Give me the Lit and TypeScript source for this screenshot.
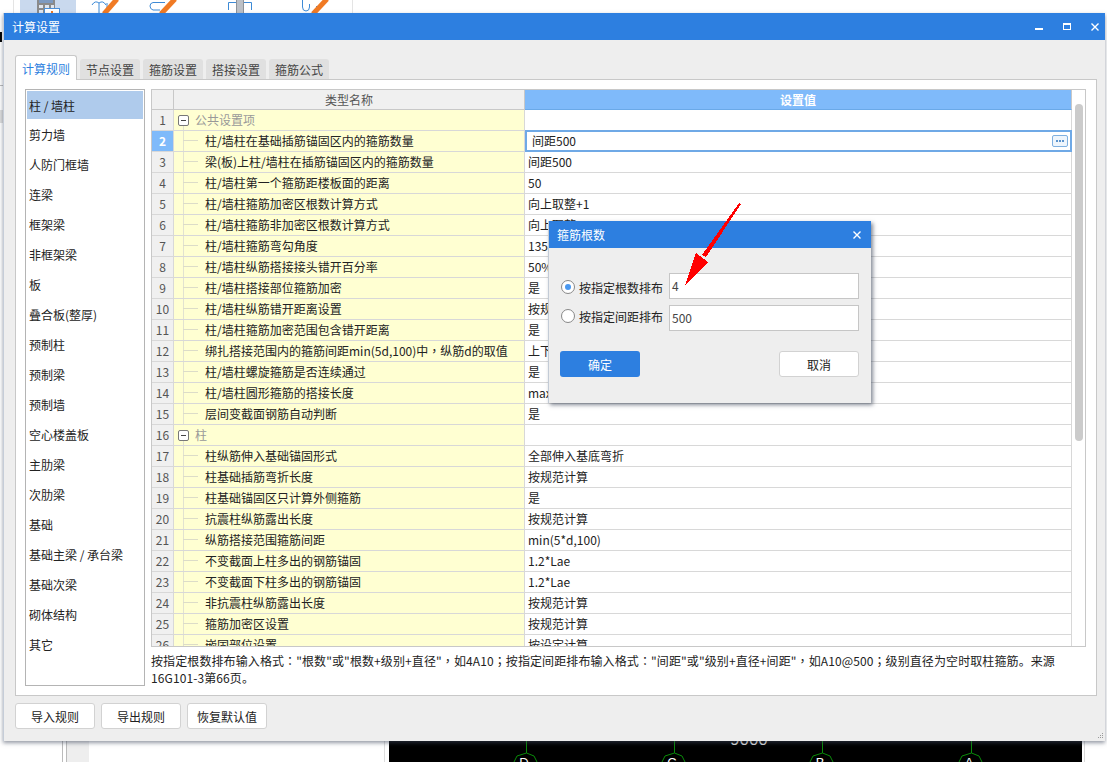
import { LitElement, html, css, svg } from "lit";
import { customElement } from "lit/decorators.js";

const LIST = ["柱 / 墙柱","剪力墙","人防门框墙","连梁","框架梁","非框架梁","板","叠合板(整厚)","预制柱","预制梁","预制墙","空心楼盖板","主肋梁","次肋梁","基础","基础主梁 / 承台梁","基础次梁","砌体结构","其它"];

type Row = { n: number; name: string; val: string; group?: boolean };
const ROWS: Row[] = [
  { n: 1, name: "公共设置项", val: "", group: true },
  { n: 2, name: "柱/墙柱在基础插筋锚固区内的箍筋数量", val: "间距500" },
  { n: 3, name: "梁(板)上柱/墙柱在插筋锚固区内的箍筋数量", val: "间距500" },
  { n: 4, name: "柱/墙柱第一个箍筋距楼板面的距离", val: "50" },
  { n: 5, name: "柱/墙柱箍筋加密区根数计算方式", val: "向上取整+1" },
  { n: 6, name: "柱/墙柱箍筋非加密区根数计算方式", val: "向上取整-1" },
  { n: 7, name: "柱/墙柱箍筋弯勾角度", val: "135°" },
  { n: 8, name: "柱/墙柱纵筋搭接接头错开百分率", val: "50%" },
  { n: 9, name: "柱/墙柱搭接部位箍筋加密", val: "是" },
  { n: 10, name: "柱/墙柱纵筋错开距离设置", val: "按规范计算" },
  { n: 11, name: "柱/墙柱箍筋加密范围包含错开距离", val: "是" },
  { n: 12, name: "绑扎搭接范围内的箍筋间距min(5d,100)中，纵筋d的取值", val: "上下层最小直径" },
  { n: 13, name: "柱/墙柱螺旋箍筋是否连续通过", val: "是" },
  { n: 14, name: "柱/墙柱圆形箍筋的搭接长度", val: "max(lae,300)" },
  { n: 15, name: "层间变截面钢筋自动判断", val: "是" },
  { n: 16, name: "柱", val: "", group: true },
  { n: 17, name: "柱纵筋伸入基础锚固形式", val: "全部伸入基底弯折" },
  { n: 18, name: "柱基础插筋弯折长度", val: "按规范计算" },
  { n: 19, name: "柱基础锚固区只计算外侧箍筋", val: "是" },
  { n: 20, name: "抗震柱纵筋露出长度", val: "按规范计算" },
  { n: 21, name: "纵筋搭接范围箍筋间距", val: "min(5*d,100)" },
  { n: 22, name: "不变截面上柱多出的钢筋锚固", val: "1.2*Lae" },
  { n: 23, name: "不变截面下柱多出的钢筋锚固", val: "1.2*Lae" },
  { n: 24, name: "非抗震柱纵筋露出长度", val: "按规范计算" },
  { n: 25, name: "箍筋加密区设置", val: "按规范计算" },
  { n: 26, name: "嵌固部位设置", val: "按设定计算" },
];

const NOTE = [
  '按指定根数排布输入格式："根数"或"根数+级别+直径"，如4A10；按指定间距排布输入格式："间距"或"级别+直径+间距"，如A10@500；级别直径为空时取柱箍筋。来源',
  "16G101-3第66页。",
];

/* The reference centres its full-width colons, commas and semicolons. */
function punct(s: string) {
  return s.split(/([：，；])/).map((p, i) => (i % 2 ? html`<span class="p">${p}</span>` : p));
}

@customElement("app-root")
export class AppRoot extends LitElement {
  static styles = css`
    :host {
      display: block; position: relative; width: 1107px; height: 762px; overflow: hidden;
      background: #fff; font-family: "Noto Sans CJK SC", "Liberation Sans", sans-serif;
      font-size: 12px; color: #222;
    }
    .p { font-family: "Noto Sans CJK TC", sans-serif; }
    .desk { position: absolute; inset: 0; display: flex; flex-direction: column; justify-content: space-between; }
    .toolbar { height: 13px; position: relative; background: #fff; }
    .tool-sel { position: absolute; left: 20px; top: 0; width: 56px; height: 13px; background: #c9d9ee; }
    .tool-svg { position: absolute; left: 0; top: 0; }
    .ground { height: 21px; display: flex; background: #fff; }
    .g1 { width: 62px; }
    .g2 { width: 4px; border-left: 1px solid #bbb; box-sizing: border-box; }
    .g3 { width: 23px; background: #eee; border-left: 1px solid #bbb; box-sizing: border-box; }
    .g4 { width: 296px; border-right: 1px solid #ddd; box-sizing: border-box; }
    .g4b { width: 4px; }
    .canvas { width: 693px; background: #000; }
    .canvas svg { display: block; }
    .g5 { flex: 1; margin-left: 2px; border-left: 1px solid #d8d8d8; }
    .strip { position: absolute; left: 0; top: 0; }

    .win {
      position: absolute; left: 3px; top: 13px; width: 1102px; height: 728px;
      display: flex; flex-direction: column; background: #eeeeee;
      box-shadow: 0 2px 4px rgba(60,70,90,.55); border-left: 1px solid #c5cdd8; box-sizing: border-box;
    }
    .titlebar {
      height: 27px; flex: none; background: #2d7fe0; color: #fff; display: flex; align-items: center;
      padding: 0 6px 0 8px; font-size: 12px; justify-content: space-between;
    }
    .winbtns { display: flex; gap: 20px; align-items: center; }
    .winbtns svg { display: block; }
    .body { flex: 1; padding: 15px 8px 0 11px; display: flex; flex-direction: column; min-height: 0; }
    .tabs { display: flex; gap: 3px; height: 24px; flex: none; }
    .tab {
      width: 60px; height: 20px; margin-top: 4px; background: #e0e0e0; color: #444; display: flex;
      align-items: center; justify-content: center; border-radius: 3px 3px 0 0; font-size: 12px;
    }
    .tab.on {
      width: 62px; height: 25px; margin-top: 0; background: #fff; color: #2d7fe0; border: 1px solid #c8c8c8;
      border-bottom: 0; box-sizing: border-box; z-index: 1;
    }
    .panel {
      height: 617px; flex: none; background: #fff; border: 1px solid #c8c8c8; box-sizing: border-box;
      padding: 9px; display: grid; grid-template-columns: 120px 935px; grid-template-rows: 597px; column-gap: 6px;
      width: 1082px;
    }
    .list { border: 1px solid #b4b4b4; box-sizing: border-box; padding: 1px; height: 597px; overflow: hidden; }
    .li { height: 30px; display: flex; align-items: center; padding-left: 2px; color: #222; font-size: 12px; white-space: nowrap; }
    .li.on { height: 28px; background: #afcbec; }
    .right { display: flex; flex-direction: column; min-height: 0; }
    .grid { height: 558px; flex: none; border: 1px solid #c8c8c8; box-sizing: border-box; position: relative; overflow: hidden; display: flex; }
    .cols { width: 920px; flex: none; display: flex; flex-direction: column; }
    .r { height: 21px; display: grid; grid-template-columns: 22px 351px 547px; flex: none; }
    .r > div { box-sizing: border-box; border-bottom: 1px solid #d8d8d8; border-right: 1px solid #d8d8d8; white-space: nowrap; overflow: hidden; line-height: 20px; }
    .r.hd { height: 20px; }
    .r.hd > div { background: #f0f0f0; color: #555; text-align: center; border-right: 1px solid #c8c8c8; border-bottom: 1px solid #c8c8c8; line-height: 19px; }
    .r.hd > div.hval { background: #7fbafa; color: #fff; font-weight: bold; border-bottom-color: #6aa9e8; }
    .num { background: #f0f0f0; text-align: center; color: #555; }
    .num.cur { background: #7fbafa; color: #fff; font-weight: bold; }
    .name { background: #ffffd2; position: relative; color: #222; padding-left: 31px; }
    .name.group { padding-left: 21px; color: #999; }
    .name .tick { position: absolute; left: 9px; top: 9px; width: 15px; height: 1px; background: #dcdcc8; }
    .name .vert { position: absolute; left: 9px; top: 0; bottom: 0; width: 1px; background: #e2e2d0; }
    .name.group .vert { top: 15px; }
    .box { position: absolute; left: 4px; top: 5px; width: 11px; height: 11px; box-sizing: border-box; border: 1px solid #777; border-radius: 2px; background: #fff; display: flex; align-items: center; justify-content: center; }
    .box i { width: 5px; height: 1px; background: #444; display: block; }
    .val { padding-left: 3px; color: #222; position: relative; }
    .r > .val.cur { border: 2px solid #6fa9e6; padding-left: 5px; line-height: 18px; height: 22px; margin-top: -1px; }
    .more { position: absolute; right: 2px; top: 3px; width: 16px; height: 12px; box-sizing: border-box; border: 1px solid #7fb0e0; border-radius: 2px; background: #eef5fc; display: flex; align-items: center; justify-content: center; gap: 1px; }
    .more i { width: 2px; height: 2px; background: #5b93cc; display: block; }
    .sb { flex: 1; background: #fff; position: relative; }
    .thumb { position: absolute; left: 3px; top: 14px; width: 8px; height: 337px; background: #cbcbcb; border-radius: 4px; }
    .note { padding: 5px 0 0 0; font-size: 12px; line-height: 17px; color: #222; width: 920px; letter-spacing: .1px; }
    .note div { white-space: nowrap; }

    .foot { flex: 1; display: flex; gap: 6px; padding-top: 7px; align-items: flex-start; }
    .btn {
      width: 80px; height: 26px; box-sizing: border-box; background: #fff; border: 1px solid #d2d2d2; border-radius: 3px;
      display: flex; align-items: center; justify-content: center; font-size: 12px; color: #222;
    }
    .grip { position: absolute; right: 1px; bottom: 1px; }

    .modal {
      position: absolute; left: 548px; top: 221px; width: 323px; height: 182px; background: #eeeeee;
      box-shadow: 2px 2px 4px rgba(50,60,80,.6); border-left: 1px solid #c3cbd6; box-sizing: border-box;
      display: flex; flex-direction: column;
    }
    .mhead { height: 27px; flex: none; background: #2d7fe0; color: #fff; display: flex; align-items: center; justify-content: space-between; padding: 0 10px 0 8px; }
    .mbody { padding: 25px 12px 0 11px; display: flex; flex-direction: column; }
    .opts { display: flex; flex-direction: column; gap: 6px; }
    .opt { display: flex; align-items: center; height: 26px; }
    .choice { display: flex; align-items: center; width: 109px; flex: none; padding-left: 1px; box-sizing: border-box; }
    .choice.a { margin-top: 2px; }
    .choice.b { margin-top: -4px; }
    .radio { width: 14px; height: 14px; flex: none; box-sizing: border-box; border: 1px solid #888; border-radius: 50%; background: #fff; display: flex; align-items: center; justify-content: center; margin-right: 4px; }
    .radio.on i { width: 6px; height: 6px; border-radius: 50%; background: #4a98f0; display: block; }
    .lab { white-space: nowrap; color: #222; }
    .inp { width: 190px; height: 26px; box-sizing: border-box; border: 1px solid #c6c6c6; background: #fff; padding-left: 2px; line-height: 23px; color: #444; }
    .mbtns { display: flex; justify-content: space-between; margin-top: 20px; }
    .mb { width: 80px; height: 26px; box-sizing: border-box; border-radius: 3px; display: flex; align-items: center; justify-content: center; }
    .mb.ok { background: #2d7fe0; color: #fff; }
    .mb.no { background: #fff; border: 1px solid #d2d2d2; color: #222; }
    .arrow { position: absolute; left: 0; top: 0; pointer-events: none; }
  `;

  private toolIcons() {
    const o = "#f07a24", b = "#3d8ad6";
    return html`<svg class="tool-svg" width="400" height="13" viewBox="0 0 400 13">
      <rect x="13" y="0" width="1" height="13" fill="#e4e4e4"/>
      <rect x="352" y="0" width="1" height="13" fill="#e4e4e4"/>
      <rect x="37" y="0" width="18" height="13" fill="#8a8a8a"/>
      <rect x="39" y="0" width="14" height="3" fill="#7d9ac0"/>
      <g fill="#dfe6ef"><rect x="39" y="5" width="4" height="3"/><rect x="45" y="5" width="4" height="3"/><rect x="51" y="5" width="3" height="3"/><rect x="39" y="10" width="4" height="3"/></g>
      <rect x="44.500" y="8.500" width="15" height="6" fill="#fff" stroke="#4a8fd8"/>
      <rect x="51" y="11" width="2" height="2" fill="${o}"/>
      <path d="M92 5Q95 0 99 3V13M99 3Q103 0 106 5" stroke="${b}" fill="none"/>
      <path d="M107 3V13" stroke="${b}" fill="none"/>
      <path d="M165 2.500H153Q150 3 150 6T153 10H160" stroke="${b}" fill="none"/>
      <path d="M228.500 10V2.500H251.500V10" stroke="${b}" fill="none"/>
      <rect x="236" y="0" width="8" height="13" fill="#bcc0c6"/>
      <path d="M236.500 0V13M243.500 0V13" stroke="#8d9299" fill="none"/>
      <path d="M302.500 0V7Q302.500 11 306 11T309.500 7V4M316.500 6V13" stroke="${b}" fill="none"/>
      ${[[104, 117], [161, 175], [313, 327]].map(([a, c]) => svg`<path d="M${a} 14L${c} -1" stroke="${o}" stroke-width="5" fill="none"/>`)}
    </svg>`;
  }

  private row(r: Row) {
    const cur = r.n === 2;
    return html`<div class="r">
      <div class="num ${cur ? "cur" : ""}">${r.n}</div>
      <div class="name ${r.group ? "group" : ""}">
        ${r.group
          ? html`<span class="vert"></span><span class="box"><i></i></span>`
          : html`<span class="vert"></span><span class="tick"></span>`}
        ${punct(r.name)}
      </div>
      <div class="val ${cur ? "cur" : ""}">${r.val}${cur ? html`<span class="more"><i></i><i></i><i></i></span>` : ""}</div>
    </div>`;
  }

  private ground() {
    return html`<div class="ground">
      <div class="g1"></div><div class="g2"></div><div class="g3"></div><div class="g4"></div><div class="g4b"></div>
      <div class="canvas"><svg width="693" height="21" viewBox="0 0 693 21">
        <text x="341" y="4" fill="#ddd" font-size="17" font-family="Liberation Sans">9000</text>
        ${[137, 285, 433, 582].map((x, i) => svg`
          <path d="M${x + 0.5} 0V12" stroke="#0a8a0a" fill="none"/>
          <path d="M${x - 12} 21L${x - 9} 15L${x + 0.5} 12L${x + 8} 15L${x + 11} 21" stroke="#0a8a0a" fill="none"/>
          <text x="${x - 2}" y="26" text-anchor="middle" fill="#fff" font-size="13" font-family="Liberation Sans">${"DCBA"[i]}</text>`)}
      </svg></div>
      <div class="g5"></div>
    </div>`;
  }

  render() {
    return html`
      <div class="desk">
        <div class="toolbar"><div class="tool-sel"></div>${this.toolIcons()}</div>
        ${this.ground()}
      </div>
      <svg class="strip" width="3" height="130" viewBox="0 0 3 130">
        <rect x="0" y="32" width="2" height="10" fill="#000"/>
        <rect x="0" y="85" width="3" height="1" fill="#bbb"/>
        <rect x="0" y="110" width="3" height="13" fill="#ddd"/>
      </svg>
      <div class="win">
        <div class="titlebar">
          <span>计算设置</span>
          <div class="winbtns">
            <svg width="8" height="8" viewBox="0 0 8 8"><rect x="0" y="5" width="8" height="2" fill="#fff"/></svg>
            <svg width="8" height="7" viewBox="0 0 8 7"><rect x=".5" y=".5" width="7" height="6" fill="none" stroke="#fff"/><rect x="0" y="0" width="8" height="2" fill="#fff"/></svg>
            <svg width="8" height="8" viewBox="0 0 8 8"><path d="M.5 .5l7 7M7.500 .5l-7 7" stroke="#fff" stroke-width="1.400"/></svg>
          </div>
        </div>
        <div class="body">
          <div class="tabs">
            <div class="tab on">计算规则</div><div class="tab">节点设置</div><div class="tab">箍筋设置</div><div class="tab">搭接设置</div><div class="tab">箍筋公式</div>
          </div>
          <div class="panel">
            <div class="list">
              ${LIST.map((t, i) => html`<div class="li ${i === 0 ? "on" : ""}">${t}</div>`)}
            </div>
            <div class="right">
              <div class="grid">
                <div class="cols">
                  <div class="r hd"><div></div><div>类型名称</div><div class="hval">设置值</div></div>
                  ${ROWS.map((r) => this.row(r))}
                </div>
                <div class="sb"><div class="thumb"></div></div>
              </div>
              <div class="note">${NOTE.map((l) => html`<div>${punct(l)}</div>`)}</div>
            </div>
          </div>
          <div class="foot">
            <div class="btn">导入规则</div><div class="btn">导出规则</div><div class="btn">恢复默认值</div>
          </div>
        </div>
        <svg class="grip" width="7" height="7" viewBox="0 0 7 7" fill="#999"><rect x="5" y="0" width="1" height="1"/><rect x="3" y="2" width="1" height="1"/><rect x="5" y="2" width="1" height="1"/><rect x="1" y="4" width="1" height="1"/><rect x="3" y="4" width="1" height="1"/><rect x="5" y="4" width="1" height="1"/></svg>
      </div>
      <div class="modal">
        <div class="mhead"><span>箍筋根数</span>
          <svg width="8" height="8" viewBox="0 0 8 8"><path d="M.5 .5l7 7M7.500 .5l-7 7" stroke="#fff" stroke-width="1.400"/></svg>
        </div>
        <div class="mbody">
          <div class="opts">
            <div class="opt"><div class="choice a"><span class="radio on"><i></i></span><span class="lab">按指定根数排布</span></div><div class="inp">4</div></div>
            <div class="opt"><div class="choice b"><span class="radio"></span><span class="lab">按指定间距排布</span></div><div class="inp">500</div></div>
          </div>
          <div class="mbtns"><div class="mb ok">确定</div><div class="mb no">取消</div></div>
        </div>
      </div>
      <svg class="arrow" width="1107" height="762" viewBox="0 0 1107 762" shape-rendering="crispEdges">
        <path d="M739 203L741 204L706 257L702 255Z" fill="#f00"/>
        <path d="M685 286L696 253L708 262Z" fill="#f00"/>
      </svg>
    `;
  }
}
